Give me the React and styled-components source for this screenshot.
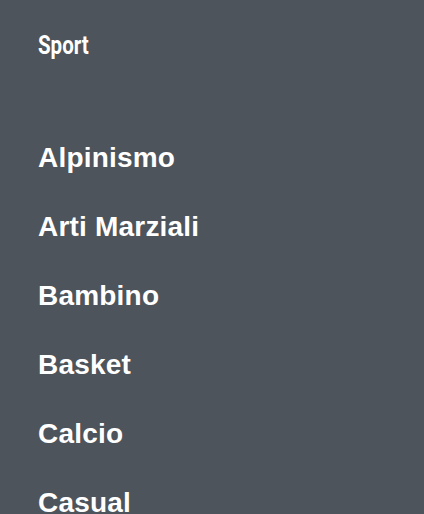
import styled, { createGlobalStyle } from 'styled-components'

const Global = createGlobalStyle`
body {
  margin: 0;
  background: #4d545b;
}
`

const Menu = styled.nav`
background: #4d545b;
height: 514px;
overflow: hidden;
padding: 30px 38px 0;
box-sizing: border-box;
color: #fff;
`

const Title = styled.h2`
margin: 0 0 79px;
font-family: "Roboto", sans-serif;
font-weight: 700;
font-size: 25px;
line-height: 32px;
transform: scaleX(0.82);
transform-origin: left center;
`

const List = styled.ul`
list-style: none;
margin: 0;
padding: 0;
display: flex;
flex-direction: column;
gap: 35px;
`

const Item = styled.li`
font-family: "Liberation Sans", Arial, sans-serif;
font-weight: 700;
font-size: 28px;
line-height: 34px;
letter-spacing: 0.2px;
`

const items = ['Alpinismo', 'Arti Marziali', 'Bambino', 'Basket', 'Calcio', 'Casual']

export default function App() {
    return (
        <Menu>
            <Global />
            <Title>Sport</Title>
            <List>
                {items.map(i => <Item key={i}>{i}</Item>)}
            </List>
        </Menu>
    )
}
